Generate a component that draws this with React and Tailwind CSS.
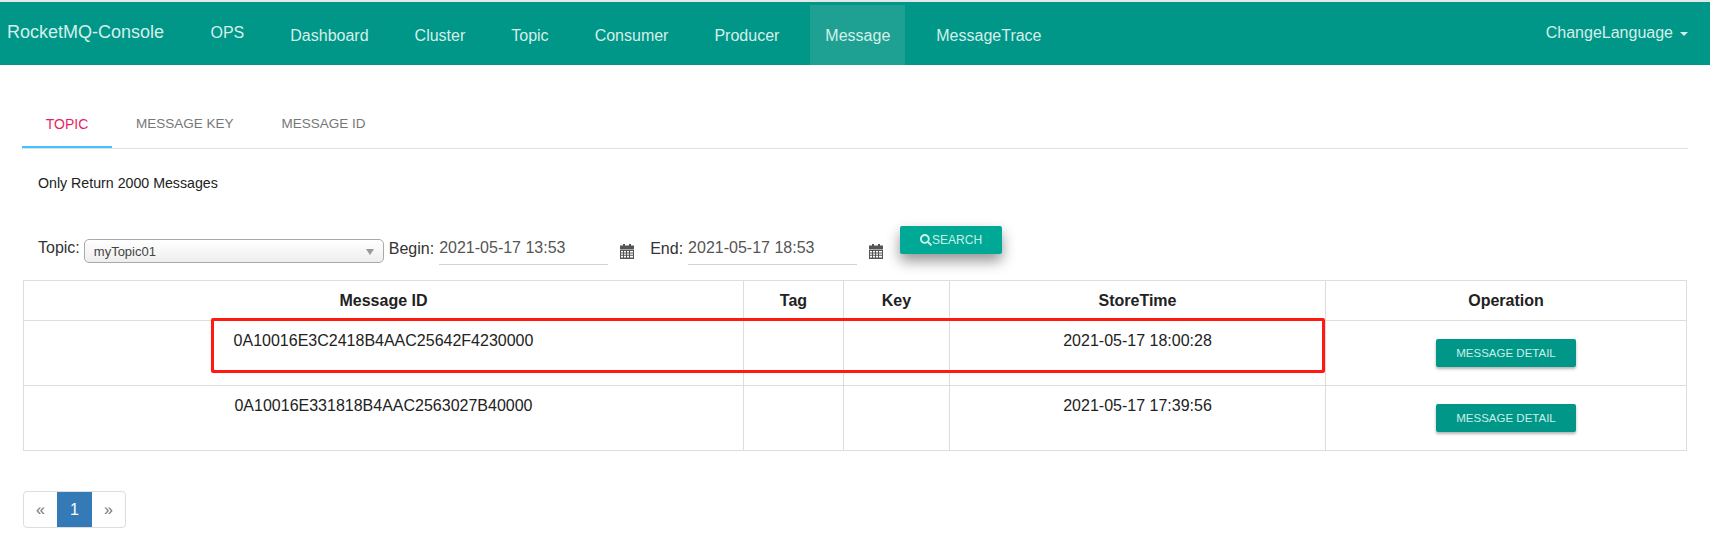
import React from "react";
import { FaSearch } from "react-icons/fa";

const navItems = ["Dashboard", "Cluster", "Topic", "Consumer", "Producer", "Message", "MessageTrace"];

const rows = [
  { id: "0A10016E3C2418B4AAC25642F4230000", time: "2021-05-17 18:00:28" },
  { id: "0A10016E331818B4AAC2563027B40000", time: "2021-05-17 17:39:56" },
];

function CalendarIcon() {
  return (
    <svg width="14" height="15" viewBox="0 0 14 15" className="mt-[18px] ml-[12px] shrink-0">
      <path d="M3 0h2v2H3zM9 0h2v2H9z" fill="#555" />
      <path d="M0 1.5h14V5H0z" fill="#555" />
      <path
        d="M0 5.5h14V15H0zM1 7v1.4h2V7zm3 0v1.4h2V7zm3 0v1.4h2V7zm3 0v1.4h3V7zM1 9.4v1.4h2V9.4zm3 0v1.4h2V9.4zm3 0v1.4h2V9.4zm3 0v1.4h3V9.4zM1 11.8v1.6h2v-1.6zm3 0v1.6h2v-1.6zm3 0v1.6h2v-1.6zm3 0v1.6h3v-1.6z"
        fill="#555"
        fillRule="evenodd"
      />
    </svg>
  );
}

function DateInput({ value }) {
  return (
    <>
      <input
        readOnly
        value={value}
        className="mt-[11px] h-[28px] w-[169px] border-b border-[#d2d2d2] pb-[5px] text-[16px] text-[#555] outline-none"
      />
      <CalendarIcon />
    </>
  );
}

export default function App() {
  return (
    <div className="h-[535px] overflow-hidden bg-white font-['Liberation_Sans',Arial,sans-serif] text-[#333]">
      {/* top nav */}
      <div className="border-t-2 border-[#e3e8e6]">
        <nav className="flex h-[63px] bg-[#009688] text-[16px] text-[#d4efe9]">
          <a className="mt-[3px] flex h-[54px] w-[187.5px] items-center pl-[7px] text-[18px]">RocketMQ-Console</a>
          <a className="mx-2 mt-[3px] flex h-[56px] items-center px-[15px]">OPS</a>
          {navItems.map((item) => (
            <a
              key={item}
              className={`mx-2 mt-[3px] flex h-[60px] items-center px-[15px] pt-[1px] ${item === "Message" ? "bg-[#1ea192]" : ""}`}
            >
              {item}
            </a>
          ))}
          <a className="mt-[3px] ml-auto mr-[22px] flex h-[55px] items-center">
            ChangeLanguage
            <span className="ml-[7px] mt-[2px] border-x-[4px] border-t-[4px] border-x-transparent border-t-[#d4efe9]" />
          </a>
        </nav>
      </div>

      {/* tabs */}
      <div className="mx-[22px] mt-[35px] flex border-b border-[#e0e0e0] text-[13.5px] text-[#777]">
        <a className="flex h-[48px] w-[90px] items-center justify-center border-b-2 border-[#40c4ff] pt-[2px] text-[14px] text-[#e91e63]">
          TOPIC
        </a>
        <a className="flex h-[48px] items-center border-b-2 border-transparent px-6 pt-[2px]">MESSAGE KEY</a>
        <a className="flex h-[48px] items-center border-b-2 border-transparent px-6 pt-[2px]">MESSAGE ID</a>
      </div>

      <p className="ml-[38px] mt-[24px] text-[14.2px] leading-[20px] text-[#222]">Only Return 2000 Messages</p>

      {/* query form */}
      <div className="ml-[38px] mt-[33px] flex h-[39px] items-start text-[16px] leading-[20px]">
        <label className="mt-[12px]">Topic:</label>
        <div className="ml-[4px] mt-[13px] flex h-[24px] w-[300px] items-center justify-between rounded-[5px] border border-[#aaa] bg-gradient-to-b from-white to-[#eee] pl-[9px] pr-[9px] pt-[2px] text-[13px] text-[#444]">
          myTopic01
          <span className="border-x-[4px] border-t-[6px] border-x-transparent border-t-[#999]" />
        </div>
        <label className="ml-[5px] mr-[5px] mt-[13px]">Begin:</label>
        <DateInput value="2021-05-17 13:53" />
        <label className="ml-[16px] mr-[5px] mt-[13px]">End:</label>
        <DateInput value="2021-05-17 18:53" />
        <button className="ml-[17px] flex h-[28px] w-[102px] items-center justify-center rounded-[2px] bg-[#00a896] text-[12px] text-[#c9f0e8] shadow-[0_7px_14px_rgba(0,0,0,0.42)]">
          <FaSearch className="text-[12px]" />
          SEARCH
        </button>
      </div>

      {/* result table */}
      <div className="relative mx-[23px] mt-[15px]">
        <table className="w-full table-fixed border-collapse border border-[#ddd] text-[16px] text-[#222]">
          <colgroup>
            <col className="w-[720px]" />
            <col className="w-[100px]" />
            <col className="w-[106px]" />
            <col className="w-[376px]" />
            <col />
          </colgroup>
          <thead>
            <tr className="h-[40px]">
              {["Message ID", "Tag", "Key", "StoreTime", "Operation"].map((h) => (
                <th key={h} className="border border-[#ddd] text-center font-bold">
                  {h}
                </th>
              ))}
            </tr>
          </thead>
          <tbody>
            {rows.map((row) => (
              <tr key={row.id} className="h-[65px]">
                <td className="border border-[#ddd] pt-[10px] text-center align-top leading-[20px]">{row.id}</td>
                <td className="border border-[#ddd]" />
                <td className="border border-[#ddd]" />
                <td className="border border-[#ddd] pt-[10px] text-center align-top leading-[20px]">{row.time}</td>
                <td className="border border-[#ddd] pt-[18px] text-center align-top">
                  <button className="h-[28px] w-[140px] rounded-[2px] bg-[#009688] pt-[1px] text-[11.5px] text-[#c9f0e8] shadow-[0_2px_3px_rgba(0,0,0,0.3)]">
                    MESSAGE DETAIL
                  </button>
                </td>
              </tr>
            ))}
          </tbody>
        </table>
        {/* red highlight drawn over the first row */}
        <div className="pointer-events-none absolute left-[188px] top-[38px] h-[55px] w-[1114px] rounded-[2px] border-[3px] border-[#ff1a0f]" />
      </div>

      {/* pagination */}
      <div className="ml-[23px] mt-[40px] flex h-[37px] w-[103px] overflow-hidden rounded-[4px] border border-[#ddd] text-[16px] text-[#777]">
        <span className="flex w-[33px] items-center justify-center">«</span>
        <span className="flex w-[35px] items-center justify-center bg-[#337ab7] text-white">1</span>
        <span className="flex flex-1 items-center justify-center">»</span>
      </div>
    </div>
  );
}
